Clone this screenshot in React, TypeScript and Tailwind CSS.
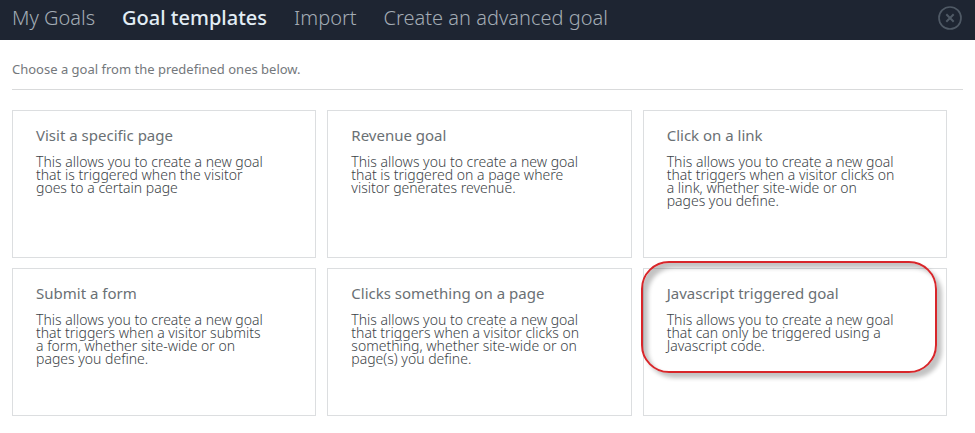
import React, { useState } from 'react';

interface GoalTemplate {
  id: string;
  title: string;
  // one entry per line of the description
  lines: string[];
  highlighted?: boolean;
}

const TABS = ['My Goals', 'Goal templates', 'Import', 'Create an advanced goal'];

const TEMPLATES: GoalTemplate[] = [
  {
    id: 'visit',
    title: 'Visit a specific page',
    lines: ['This allows you to create a new goal', 'that is triggered when the visitor', 'goes to a certain page'],
  },
  {
    id: 'revenue',
    title: 'Revenue goal',
    lines: ['This allows you to create a new goal', 'that is triggered on a page where', 'visitor generates revenue.'],
  },
  {
    id: 'link',
    title: 'Click on a link',
    lines: ['This allows you to create a new goal', 'that triggers when a visitor clicks on', 'a link, whether site-wide or on', 'pages you define.'],
  },
  {
    id: 'form',
    title: 'Submit a form',
    lines: ['This allows you to create a new goal', 'that triggers when a visitor submits', 'a form, whether site-wide or on', 'pages you define.'],
  },
  {
    id: 'click',
    title: 'Clicks something on a page',
    lines: ['This allows you to create a new goal', 'that triggers when a visitor clicks on', 'something, whether site-wide or on', 'page(s) you define.'],
  },
  {
    id: 'javascript',
    title: 'Javascript triggered goal',
    lines: ['This allows you to create a new goal', 'that can only be triggered using a', 'Javascript code.'],
    highlighted: true,
  },
];

const TemplateCard: React.FC<{ template: GoalTemplate }> = ({ template }) => (
  <div className="relative min-h-[148px] border border-[#dcdee0] px-[23px] pt-[14px] pb-6">
    {template.highlighted && (
      <div className="pointer-events-none absolute -top-2 -left-[3px] right-[9px] h-[112px] rounded-[28px] border-2 border-[#d8262a] shadow-[5px_5px_4px_0px_rgba(0,0,0,0.24),inset_5px_5px_4px_0px_rgba(0,0,0,0.24)]" />
    )}
    <button type="button" className="relative block cursor-pointer text-left">
      <span className="block text-[15px] leading-5 text-[#6a7074]">{template.title}</span>
      <span className="mt-[10px] block text-[14px] leading-[13px] font-light text-[#3c4347]">
        {template.lines.map((line) => (
          <span key={line} className="block whitespace-nowrap">{line}</span>
        ))}
      </span>
    </button>
  </div>
);

const App: React.FC = () => {
  const [activeTab, setActiveTab] = useState('Goal templates');

  return (
    <div className="min-h-screen bg-white font-['Noto_Sans',sans-serif]">
      <header className="flex h-10 items-center justify-between bg-[#1e2532] px-3">
        <nav className="flex items-center gap-[27px]">
          {TABS.map((tab) => (
            <button
              key={tab}
              type="button"
              onClick={() => setActiveTab(tab)}
              className={`cursor-pointer pb-1 text-[20px] leading-6 whitespace-nowrap ${
                tab === activeTab ? 'font-medium text-[#e2edf5]' : 'font-light text-[#a3acb5]'
              }`}
            >
              {tab}
            </button>
          ))}
        </nav>
        <button type="button" aria-label="Close" className="cursor-pointer pb-1 text-[#4f5965]">
          <svg width="26" height="26" viewBox="0 0 26 26" fill="none" stroke="currentColor">
            <circle cx="13" cy="13" r="11" strokeWidth="1.7" />
            <path d="M9.3 9.3l7.4 7.4M16.7 9.3l-7.4 7.4" strokeWidth="2" />
          </svg>
        </button>
      </header>

      <main className="px-3 pb-4">
        <p className="border-b border-[#d9dadb] pt-5 pb-[10px] text-[13px] leading-[19px] text-[#74787c]">
          Choose a goal from the predefined ones below.
        </p>
        <div className="mt-5 mr-4 grid grid-cols-3 gap-x-[11px] gap-y-[10px]">
          {TEMPLATES.map((template) => (
            <TemplateCard key={template.id} template={template} />
          ))}
        </div>
      </main>
    </div>
  );
};

export default App;
